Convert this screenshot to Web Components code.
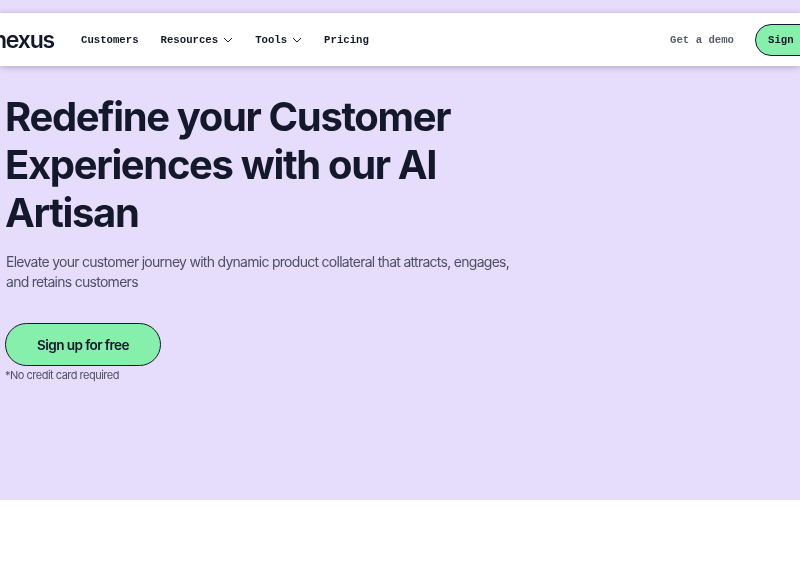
<!DOCTYPE html>
<html><head><meta charset="utf-8"><title>Nexus</title>
<style>
html,body{margin:0;padding:0;width:800px;height:576px;overflow:hidden;background:#fff}
</style></head><body>
<template id="nav-t">
<style>
:host{display:flex;align-items:center;height:53px;background:#fff;box-shadow:0 1px 6px rgba(70,60,110,.35);font:700 10.67px/14px "Liberation Mono",monospace;color:#14182b;white-space:nowrap;position:relative}
.clip{width:81px;flex:none;overflow:hidden;filter:blur(.3px)}
.logo{font:600 23px/24px Inter,sans-serif;letter-spacing:-1.2px;color:#14182b;margin-left:-7px}
.links{display:flex;align-items:center;gap:22px;flex:none;filter:blur(.3px)}
.end{margin-left:auto;display:flex;align-items:center;flex:none;margin-right:-40px;filter:blur(.3px)}
.demo{color:#5c5f70;margin-right:21px}
.sign{box-sizing:border-box;width:85px;height:32px;border:1.5px solid #14182b;border-radius:16px;background:#86efac;display:flex;align-items:center;padding-left:12px}
</style>
<div class="clip"><div class="logo">nexus</div></div>
<div class="links"><slot></slot></div>
<div class="end"><span class="demo">Get a demo</span><span class="sign">Sign up</span></div>
</template>
<template id="link-t">
<style>
:host{display:inline-flex;align-items:center;gap:5px}
svg{display:none;width:10px;height:6px}
:host([menu]) svg{display:block}
</style>
<slot></slot><svg viewBox="0 0 10 6"><path d="M1 1l4 4 4-4" fill="none" stroke="#14182b" stroke-width="1"/></svg>
</template>
<template id="hero-t">
<style>
:host{display:block;background:#e6dcfb;height:500px;box-sizing:border-box;padding:13px 0 0;font-family:Inter,sans-serif;overflow:hidden}
.body{padding:27px 0 0 5px;width:530px;filter:blur(.3px)}
h1{margin:0;font:700 40px/48px Inter,sans-serif;letter-spacing:-1.35px;color:#14182b;width:480px}
p{margin:15px 0 0 1px;font:400 14px/20px Inter,sans-serif;letter-spacing:-.72px;color:#4f5066;width:520px}
.cta{box-sizing:border-box;margin-top:31px;width:156px;height:43px;border:1px solid #14182b;border-radius:22px;background:#86efac;display:flex;align-items:center;justify-content:center;font:600 13.6px/20px Inter,sans-serif;letter-spacing:-.6px;color:#14182b}
small{display:block;margin-top:1px;font:400 11px/16px Inter,sans-serif;letter-spacing:-.5px;color:#4f5066}
</style>
<slot name="nav"></slot>
<div class="body">
<h1>Redefine your Customer Experiences with our AI Artisan</h1>
<p>Elevate your customer journey with dynamic product collateral that attracts, engages, and retains customers</p>
<div class="cta">Sign up for free</div>
<small>*No credit card required</small>
</div>
</template>
<x-hero><x-nav slot="nav"><x-link>Customers</x-link><x-link menu>Resources</x-link><x-link menu>Tools</x-link><x-link>Pricing</x-link></x-nav></x-hero>
<script>
for(const [tag,id] of [['x-hero','hero-t'],['x-nav','nav-t'],['x-link','link-t']]){
customElements.define(tag,class extends HTMLElement{constructor(){super();this.attachShadow({mode:'open'}).append(document.getElementById(id).content.cloneNode(true));}});
}
</script>
</body></html>
